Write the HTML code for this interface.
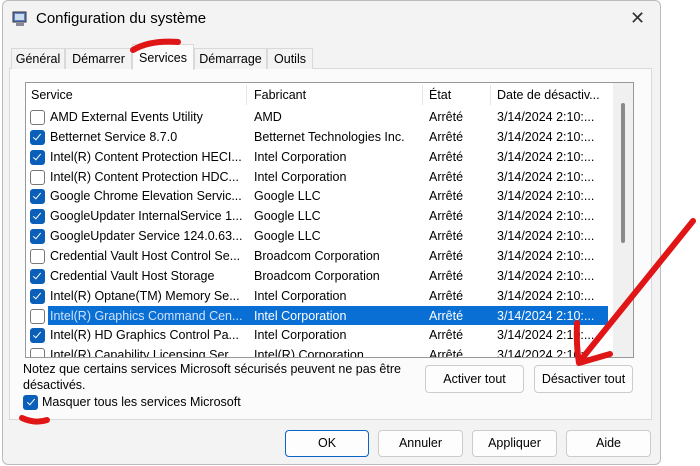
<!DOCTYPE html><html><head><style>
body{margin:0;width:700px;height:466px;background:#fff;font-family:"Liberation Sans",sans-serif;font-size:12px;color:#000;position:relative;overflow:hidden}
.a{position:absolute}
.win{left:2px;top:0;width:657px;height:463px;background:#f3f3f3;border:1px solid #bbb;border-radius:6px}
.tab{position:absolute;top:48px;height:20px;border:1px solid #d9d9d9;border-bottom:none;background:#f3f3f3;font-size:12.5px;line-height:20px;text-align:center}
.panel{left:9px;top:68px;width:641px;height:350px;background:#fbfbfb;border:1px solid #d9d9d9}
.list{left:25px;top:82px;width:607px;height:274px;background:#fff;border:1px solid #999;overflow:hidden}
.row{position:absolute;left:0;height:20px;width:582px;font-size:12.5px;line-height:20px;white-space:nowrap}
.row span{position:absolute}
.cb{position:absolute;left:4px;top:3px;width:13px;height:13px;border:1px solid #777;border-radius:3px;background:#fff}
.cb.on{background:#0a5fb8;border-color:#0a5fb8}
.cb.on:after{content:"";position:absolute;left:4px;top:1px;width:3px;height:7px;border:solid #fff;border-width:0 1.5px 1.5px 0;transform:rotate(40deg)}
.btn{position:absolute;background:#fdfdfd;border:1px solid #ccc;border-radius:4px;text-align:center;font-size:12.5px}
</style></head><body>
<div class="a win"></div>
<svg class="a" style="left:11px;top:10px" width="18" height="18"><rect x="2" y="2" width="13" height="10" fill="#5b7fc7" stroke="#333"/><rect x="4" y="4" width="9" height="6" fill="#cde"/><rect x="5" y="13" width="8" height="3" fill="#889"/></svg>
<div class="a" style="left:36px;top:10px;font-size:15px">Configuration du système</div>
<div class="a" style="left:630px;top:8px;font-size:18px;color:#333">✕</div>
<div class="a panel"></div>
<div class="tab" style="left:11px;width:52px">Général</div>
<div class="tab" style="left:65px;width:65px">Démarrer</div>
<div class="tab" style="left:132px;top:44px;height:25px;width:60px;background:#fbfbfb;line-height:26px">Services</div>
<div class="tab" style="left:194px;width:71px">Démarrage</div>
<div class="tab" style="left:267px;width:44px">Outils</div>
<div class="a list">
<div class="a" style="left:587px;top:0;width:20px;height:274px;background:#f0f0f0"></div>
<div class="row" style="top:2px;height:22px"><span style="left:5px">Service</span><span style="left:228px">Fabricant</span><span style="left:403px">État</span><span style="left:471px">Date de désactiv...</span>
<span style="left:220px;top:0;width:1px;height:20px;background:#e5e5e5"></span><span style="left:396px;width:1px;height:20px;background:#e5e5e5"></span><span style="left:464px;width:1px;height:20px;background:#e5e5e5"></span></div>
<div id="rows"></div>
<div class="a" style="left:595px;top:20px;width:4px;height:140px;background:#8a8a8a;border-radius:2px"></div>
</div>
<script>
var d=[[0,"AMD External Events Utility","AMD"],[1,"Betternet Service 8.7.0","Betternet Technologies Inc."],[1,"Intel(R) Content Protection HECI...","Intel Corporation"],[0,"Intel(R) Content Protection HDC...","Intel Corporation"],[1,"Google Chrome Elevation Servic...","Google LLC"],[1,"GoogleUpdater InternalService 1...","Google LLC"],[1,"GoogleUpdater Service 124.0.63...","Google LLC"],[0,"Credential Vault Host Control Se...","Broadcom Corporation"],[1,"Credential Vault Host Storage","Broadcom Corporation"],[1,"Intel(R) Optane(TM) Memory Se...","Intel Corporation"],[0,"Intel(R) Graphics Command Cen...","Intel Corporation"],[1,"Intel(R) HD Graphics Control Pa...","Intel Corporation"],[0,"Intel(R) Capability Licensing Ser...","Intel(R) Corporation"]];
var h="";d.forEach(function(r,i){var sel=i==10;h+='<div class="row" style="top:'+(24+i*19.85)+'px"><div class="cb'+(r[0]?' on':'')+'"></div>'+(sel?'<span style="left:22px;width:560px;height:19px;background:#0a6fd4"></span>':'')+'<span style="left:24px;'+(sel?'color:#cfe3ff':'')+'">'+r[1]+'</span><span style="left:228px;'+(sel?'color:#fff':'')+'">'+r[2]+'</span><span style="left:403px;'+(sel?'color:#fff':'')+'">Arrêté</span><span style="left:471px;'+(sel?'color:#fff':'')+'">3/14/2024 2:10:...</span></div>'});document.getElementById("rows").innerHTML=h;
</script>
<div class="a" style="left:23px;top:361px;font-size:12.5px;line-height:16px;width:390px">Notez que certains services Microsoft sécurisés peuvent ne pas être désactivés.</div>
<div class="btn" style="left:425px;top:365px;width:97px;height:26px;line-height:26px">Activer tout</div>
<div class="btn" style="left:534px;top:365px;width:97px;height:26px;line-height:26px">Désactiver tout</div>
<div class="a" style="left:23px;top:395px;width:15px;height:15px;background:#0a5fb8;border-radius:3px"></div>
<div class="a" style="left:29px;top:397px;width:3px;height:7px;border:solid #fff;border-width:0 1.5px 1.5px 0;transform:rotate(40deg)"></div>
<div class="a" style="left:42px;top:395px;font-size:12.5px">Masquer tous les services Microsoft</div>
<div class="btn" style="left:285px;top:430px;width:82px;height:25px;line-height:25px;border:1.5px solid #0a64c8">OK</div>
<div class="btn" style="left:378px;top:430px;width:83px;height:25px;line-height:25px">Annuler</div>
<div class="btn" style="left:472px;top:430px;width:83px;height:25px;line-height:25px">Appliquer</div>
<div class="btn" style="left:566px;top:430px;width:83px;height:25px;line-height:25px">Aide</div>
<svg class="a" style="left:0;top:0" width="700" height="466"><g fill="none" stroke="#e01515" stroke-width="6" stroke-linecap="round" stroke-linejoin="round">
<path d="M133 50 Q150 40 178 42"/>
<path d="M22 418 Q35 424 47 420"/>
<path d="M693 221 L580 361"/>
<path d="M577 323 Q576 345 579 363 L610 354"/></g></svg>
</body></html>
